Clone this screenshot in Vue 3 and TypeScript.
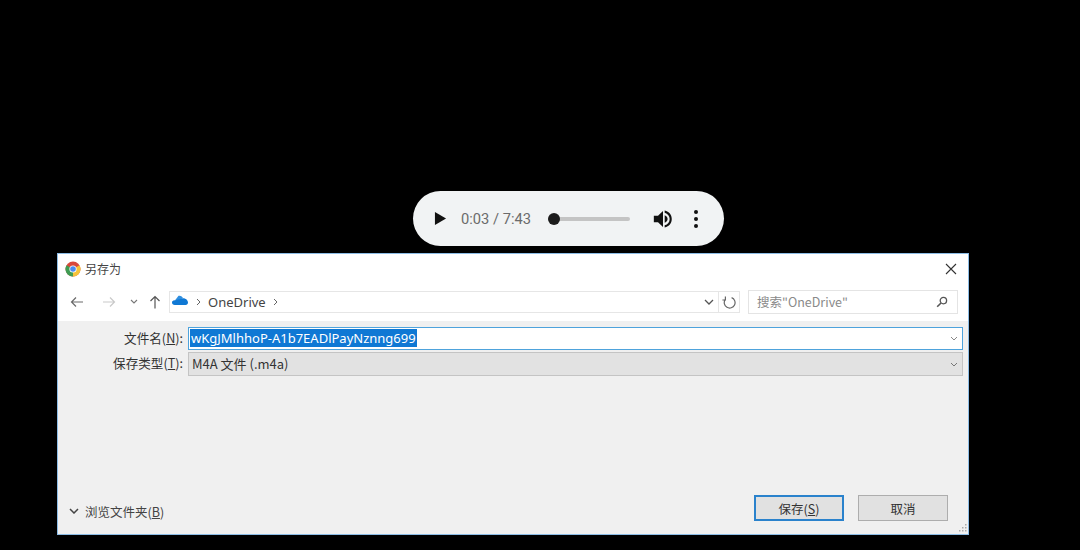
<script setup lang="ts">
const playerTime = '0:03 / 7:43'
const fileName = 'wKgJMlhhoP-A1b7EADlPayNznng699'
</script>

<template>
  <div class="page">
    <!-- Audio player -->
    <div class="player">
      <svg class="play" viewBox="0 0 14 16"><path d="M1 1 L13 8 L1 15 Z" fill="#111" /></svg>
      <span class="time">{{ playerTime }}</span>
      <div class="track"><span class="thumb"></span></div>
      <svg class="volume" viewBox="0 0 24 24">
        <path d="M1 8 H6 L12 2.5 V21.5 L6 16 H1 Z" fill="#111" />
        <path d="M14 7.5 C16.6 8.6 17.5 10.2 17.5 12 C17.5 13.8 16.6 15.4 14 16.5 Z" fill="#111" />
        <path d="M14 1.8 C19.4 3 22.5 7 22.5 12 C22.5 17 19.4 21 14 22.2 V19.6 C17.8 18.5 20 15.6 20 12 C20 8.4 17.8 5.5 14 4.4 Z" fill="#111" />
      </svg>
      <div class="dots"><span></span><span></span><span></span></div>
    </div>

    <!-- Save as dialog -->
    <div class="dialog">
      <div class="titlebar">
        <svg class="chrome" viewBox="0 0 16 16">
          <circle cx="8" cy="8" r="7.5" fill="#d9483b" />
          <path d="M8 8 L14.5 4.2 A7.5 7.5 0 0 1 8 15.5 Z" fill="#f5c33b" />
          <path d="M8 8 L8 15.5 A7.5 7.5 0 0 1 1.5 4.2 Z" fill="#3f9c53" />
          <circle cx="8" cy="8" r="3.6" fill="#fff" />
          <circle cx="8" cy="8" r="2.8" fill="#4b8bf0" />
        </svg>
        <span class="title">另存为</span>
        <svg class="close" viewBox="0 0 12 12"><path d="M1 1 L11 11 M11 1 L1 11" stroke="#333" stroke-width="1.1" fill="none" /></svg>
      </div>

      <div class="toolbar">
        <svg class="nav nav-back" viewBox="0 0 14 12"><path d="M13 6 H1.5 M6 1.5 L1.5 6 L6 10.5" stroke="#6a6a6a" stroke-width="1.2" fill="none" /></svg>
        <svg class="nav nav-forward" viewBox="0 0 14 12"><path d="M1 6 H12.5 M8 1.5 L12.5 6 L8 10.5" stroke="#c9c9c9" stroke-width="1.2" fill="none" /></svg>
        <svg class="nav-drop" viewBox="0 0 8 5"><path d="M1 1 L4 4 L7 1" stroke="#777" stroke-width="1.1" fill="none" /></svg>
        <svg class="nav nav-up" viewBox="0 0 12 14"><path d="M6 13.5 V1.5 M1.5 6 L6 1.5 L10.5 6" stroke="#555" stroke-width="1.2" fill="none" /></svg>

        <div class="address">
          <svg class="cloud" viewBox="0 0 16 10">
            <path d="M2.5 6 L6.5 0.8 C8.4 0.2 10.4 1.2 11 3.2 L6 5.6 Z" fill="#2f8fe0" />
            <path d="M2.8 10 C1 10 0 8.8 0 7.6 C0 6.2 1.2 5.2 2.8 5.4 L6.2 4.4 L11.2 3.2 C13.8 3.2 16 5.4 16 7.6 C16 9 15 10 13.6 10 Z" fill="#0f78d4" />
          </svg>
          <svg class="crumb" viewBox="0 0 5 8"><path d="M1 1 L4 4 L1 7" stroke="#666" fill="none" /></svg>
          <span class="crumb-text">OneDrive</span>
          <svg class="crumb" viewBox="0 0 5 8"><path d="M1 1 L4 4 L1 7" stroke="#666" fill="none" /></svg>
          <svg class="address-drop" viewBox="0 0 10 6"><path d="M1 1 L5 5 L9 1" stroke="#555" stroke-width="1.3" fill="none" /></svg>
          <span class="address-refresh">
            <svg viewBox="0 0 14 14"><path d="M3.4 1.6 V5 H0.4 M9.6 2.6 A5.4 5.4 0 1 1 3.2 4.6" stroke="#666" stroke-width="1.2" fill="none" /></svg>
          </span>
        </div>

        <div class="search">
          <span>搜索"OneDrive"</span>
          <svg viewBox="0 0 12 12"><circle cx="7.4" cy="4.6" r="3.2" stroke="#555" stroke-width="1.3" fill="none" /><path d="M5 7 L1.2 10.8" stroke="#555" stroke-width="1.6" /></svg>
        </div>
      </div>

      <div class="body">
        <div class="form">
          <div class="row">
            <label class="label">文件名(<u>N</u>):</label>
            <div class="field field--active">
              <span class="selected">{{ fileName }}</span>
              <svg class="field-drop" viewBox="0 0 8 5"><path d="M1 1 L4 4 L7 1" stroke="#888" fill="none" /></svg>
            </div>
          </div>
          <div class="row">
            <label class="label">保存类型(<u>T</u>):</label>
            <div class="field field--type">
              <span>M4A 文件 (.m4a)</span>
              <svg class="field-drop" viewBox="0 0 8 5"><path d="M1 1 L4 4 L7 1" stroke="#777" fill="none" /></svg>
            </div>
          </div>
        </div>

        <div class="footer">
          <div class="browse">
            <svg viewBox="0 0 10 6"><path d="M1 1 L5 5 L9 1" stroke="#444" stroke-width="1.5" fill="none" /></svg>
            <span>浏览文件夹(<u>B</u>)</span>
          </div>
          <div class="actions">
            <button class="btn btn--primary">保存(<u>S</u>)</button>
            <button class="btn">取消</button>
          </div>
        </div>
        <svg class="grip" viewBox="0 0 10 10">
          <path d="M8 1 h1.5 v1.5 h-1.5 Z M5 4 h1.5 v1.5 h-1.5 Z M8 4 h1.5 v1.5 h-1.5 Z M2 7 h1.5 v1.5 h-1.5 Z M5 7 h1.5 v1.5 h-1.5 Z M8 7 h1.5 v1.5 h-1.5 Z" fill="#aaa" />
        </svg>
      </div>
    </div>
  </div>
</template>

<style>
html,
body {
  margin: 0;
  background: #000;
}
</style>

<style scoped>
.page {
  width: 1080px;
  height: 550px;
  overflow: hidden;
  background: #000;
  padding-top: 191px;
  box-sizing: border-box;
  font-family: 'Noto Sans CJK SC', 'Noto Sans', sans-serif;
}

/* === Player === */
.player {
  width: 311px;
  height: 55px;
  margin-left: 413px;
  margin-bottom: 7px;
  box-sizing: border-box;
  display: flex;
  align-items: center;
  background: #f1f3f4;
  border-radius: 28px;
  padding-left: 21px;
}
.play {
  width: 13px;
  height: 15px;
  margin-right: 14px;
}
.time {
  width: 87px;
  font-family: Roboto, 'Liberation Sans', sans-serif;
  font-size: 14.7px;
  color: #6b6b6b;
  white-space: nowrap;
}
.track {
  position: relative;
  width: 82px;
  height: 4px;
  border-radius: 2px;
  background: #c4c4c4;
  margin-right: 23px;
}
.thumb {
  position: absolute;
  left: 0;
  top: -4px;
  width: 12px;
  height: 12px;
  border-radius: 50%;
  background: #1c1c1c;
}
.volume {
  width: 20px;
  height: 20px;
  margin-right: 21px;
}
.dots {
  display: flex;
  flex-direction: column;
  gap: 3px;
}
.dots span {
  width: 4px;
  height: 4px;
  border-radius: 50%;
  background: #111;
}

/* === Dialog === */
.dialog {
  width: 912px;
  height: 282px;
  margin-left: 57px;
  box-sizing: border-box;
  display: flex;
  flex-direction: column;
  background: #fff;
  border: 1px solid #8dbde6;
  color: #333;
}
.titlebar {
  height: 30px;
  flex-shrink: 0;
  display: flex;
  align-items: center;
  padding: 0 11px 0 7px;
}
.chrome {
  width: 16px;
  height: 16px;
  margin-right: 4px;
}
.title {
  font-size: 12px;
  color: #444;
  margin-bottom: 2px;
}
.close {
  width: 12px;
  height: 12px;
  margin-left: auto;
}
.toolbar {
  height: 37px;
  flex-shrink: 0;
  display: flex;
  align-items: center;
  padding-bottom: 2px;
  box-sizing: border-box;
}
.nav {
  flex-shrink: 0;
}
.nav-back {
  width: 14px;
  height: 12px;
  margin-left: 12px;
}
.nav-forward {
  width: 14px;
  height: 12px;
  margin-left: 18px;
}
.nav-drop {
  width: 8px;
  height: 5px;
  margin-left: 14px;
}
.nav-up {
  width: 12px;
  height: 14px;
  margin-left: 11px;
  margin-right: 8px;
}
.address {
  width: 571px;
  height: 22px;
  box-sizing: border-box;
  display: flex;
  align-items: center;
  border: 1px solid #e6e6e6;
  padding-left: 2px;
  margin-right: 8px;
}
.cloud {
  width: 16px;
  height: 10px;
  margin-bottom: 4px;
}
.crumb {
  width: 5px;
  height: 8px;
  margin-left: 8px;
}
.crumb-text {
  font-size: 13px;
  color: #444;
  margin-left: 7px;
  font-family: 'Noto Sans', sans-serif;
}
.crumb-text + .crumb {
  margin-left: 7px;
}
.address-drop {
  width: 10px;
  height: 6px;
  margin-left: auto;
  margin-right: 4px;
}
.address-refresh {
  width: 20px;
  height: 20px;
  border-left: 1px solid #e6e6e6;
  display: flex;
  align-items: center;
  justify-content: center;
}
.address-refresh svg {
  width: 14px;
  height: 14px;
}
.search {
  width: 210px;
  height: 24px;
  box-sizing: border-box;
  display: flex;
  align-items: center;
  justify-content: space-between;
  border: 1px solid #e4e4e4;
  padding: 0 9px 0 8px;
  font-size: 12.5px;
  color: #8a8a8a;
}
.search svg {
  width: 12px;
  height: 12px;
}

/* === Form === */
.body {
  position: relative;
  flex: 1;
  display: flex;
  flex-direction: column;
  justify-content: space-between;
  background: #f0f0f0;
  padding: 6px 5px 13px 0;
}
.form {
  display: flex;
  flex-direction: column;
  gap: 2px;
}
.row {
  display: flex;
  align-items: center;
}
.label {
  width: 130px;
  padding-right: 5px;
  box-sizing: border-box;
  text-align: right;
  font-size: 12.6px;
  line-height: 18px;
  color: #333;
  white-space: nowrap;
  margin-bottom: 2px;
}
.field {
  flex: 1;
  height: 23px;
  box-sizing: border-box;
  display: flex;
  align-items: center;
  justify-content: space-between;
  padding: 0 4px 0 1px;
  font-size: 13px;
}
.field--active {
  background: #fff;
  border: 1px solid #4ea3dc;
}
.field--type {
  height: 24px;
  background: #e2e2e2;
  border: 1px solid #c4c4c4;
  padding-left: 3px;
  font-size: 13px;
  color: #333;
}
.field--type span {
  line-height: 18px;
  margin-bottom: 1px;
}
.selected {
  background: #0f78d4;
  color: #fff;
  line-height: 18px;
  padding: 0 1px;
  margin-bottom: 1px;
  font-family: 'Noto Sans', sans-serif;
}
.field-drop {
  width: 8px;
  height: 5px;
}

/* === Footer === */
.footer {
  display: flex;
  align-items: center;
  justify-content: space-between;
  padding-left: 11px;
  padding-right: 15px;
}
.browse {
  display: flex;
  align-items: center;
  gap: 6px;
  font-size: 12.5px;
  color: #444;
  margin-top: 6px;
}
.browse svg {
  width: 10px;
  height: 6px;
}
.actions {
  display: flex;
  gap: 14px;
}
.btn {
  width: 90px;
  height: 26px;
  box-sizing: border-box;
  background: #e1e1e1;
  border: 1px solid #adadad;
  font-family: inherit;
  font-size: 12.5px;
  color: #333;
  padding: 0;
}
.btn--primary {
  border: 2px solid #2a82cc;
}
.grip {
  position: absolute;
  right: 1px;
  bottom: 1px;
  width: 10px;
  height: 10px;
}
</style>
